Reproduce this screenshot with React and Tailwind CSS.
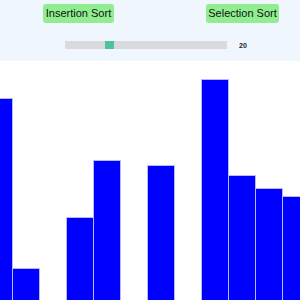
import React from "react";

const bars = [202, 32, 0, 83, 140, 0, 135, 0, 221, 125, 112, 104];

export default function App() {
  return (
    <div
      className="w-[300px] h-[300px] overflow-hidden bg-white"
      style={{ fontFamily: '"Liberation Sans", Arial, sans-serif' }}
    >
      <div className="h-[61px] bg-[#eff6fe] flex flex-col">
        <div className="flex pt-[4px] pl-[43px] gap-[92px]">
          <button className="w-[71px] h-[19px] rounded-[3px] bg-[#90ee90] text-[11px] leading-[19px] text-[#111] text-center">
            Insertion Sort
          </button>
          <button className="w-[73px] h-[19px] rounded-[3px] bg-[#90ee90] text-[11px] leading-[19px] text-[#111] text-center">
            Selection Sort
          </button>
        </div>
        <div className="flex items-center pl-[65px] mt-[18px] h-[8px]">
          <div className="relative w-[162px] h-[8px] bg-[#d8dadd]">
            <div className="absolute left-[40px] top-0 w-[9px] h-[8px] bg-[#4ec39c]" />
          </div>
          <span className="ml-[12px] text-[7px] font-bold text-[#222] leading-none">20</span>
        </div>
      </div>
      <div className="flex items-end h-[239px] ml-[-14px]">
        {bars.map((h, i) => (
          <div
            key={i}
            className={
              "shrink-0 w-[28px] -ml-px bg-[#0000ff] " +
              (h > 0 ? "border-x border-t border-[#b8b8ff]" : "")
            }
            style={{ height: h }}
          />
        ))}
      </div>
    </div>
  );
}
